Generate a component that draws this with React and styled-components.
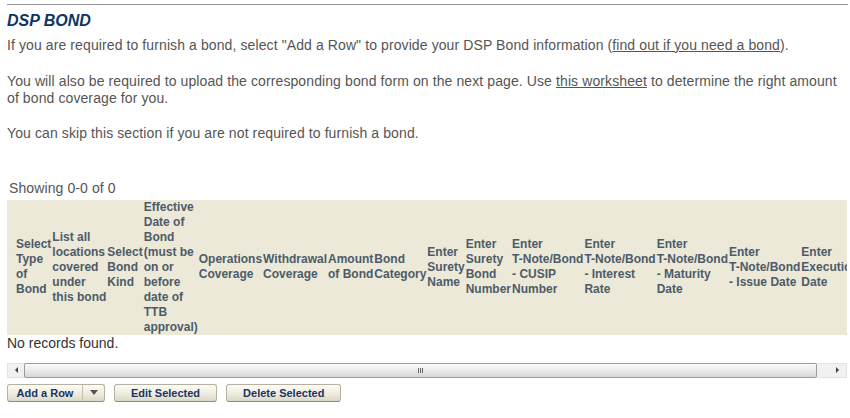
import { useLayoutEffect, useRef, useState } from "react";
import styled, { createGlobalStyle } from "styled-components";

const GlobalStyle = createGlobalStyle`
  body {
    margin: 0;
    background: #fff;
    font-family: "Liberation Sans", Arial, sans-serif;
  }
`;

const Page = styled.div`
  width: 841px;
  padding: 4px 2px 0 7px;
`;

const Rule = styled.hr`
  margin: 0;
  border: 0;
  border-top: 1px solid #999;
`;

const Title = styled.h2`
  margin: 6px 0 0;
  font-size: 16px;
  line-height: 20px;
  font-weight: bold;
  font-style: italic;
  color: #0d3566;
`;

const Para = styled.p`
  margin: ${p => p.$gap}px 0 0;
  font-size: 14px;
  line-height: 17.5px;
  letter-spacing: 0.1px;
  color: #555;

  a {
    color: inherit;
    text-decoration: underline;
  }
`;

const Showing = styled.div`
  margin-top: 37px;
  padding-left: 2px;
  font-size: 14px;
  line-height: 16px;
  letter-spacing: 0.1px;
  color: #555;
`;

const Grid = styled.div`
  margin-top: 4px;
  width: 840px;
`;

const Viewport = styled.div`
  overflow: hidden;
`;

const Table = styled.table`
  border-collapse: collapse;
  border-spacing: 0;
`;

const HeadRow = styled.tr`
  background: #ece9d8;
`;

const Th = styled.th`
  padding: 0 1px 0 0;
  text-align: left;
  vertical-align: middle;
  white-space: nowrap;
  font-size: 12px;
  line-height: 15px;
  font-weight: bold;
  color: #4d5b69;
`;

const SelectTh = styled.th`
  padding: 0 0 0 9px;
`;

const Empty = styled.td`
  padding: 0;
  font-size: 14px;
  line-height: 16px;
  color: #333;
  white-space: nowrap;
`;

const ScrollBar = styled.div`
  display: flex;
  height: 15px;
  margin-top: 12px;
  box-sizing: border-box;
  background: #f1f1f1;
  border: 1px solid #e2e2e2;
`;

const ArrowBox = styled.div`
  flex: none;
  width: 17px;
  display: flex;
  align-items: center;
  justify-content: center;
`;

const Arrow = styled.span`
  width: 0;
  height: 0;
  border-top: 3px solid transparent;
  border-bottom: 3px solid transparent;
  ${p => (p.$dir === "left" ? "border-right: 3px solid #444;" : "border-left: 3px solid #444;")}
`;

const Track = styled.div`
  flex: 1;
  display: flex;
  margin-left: -1px;
`;

const Thumb = styled.div`
  box-sizing: border-box;
  margin: -1px 0;
  display: flex;
  align-items: center;
  justify-content: center;
  border: 1px solid #9c9c9c;
  border-radius: 2px;
  background: linear-gradient(#fbfbfb, #ececec 45%, #d6d6d6);
`;

const Grip = styled.span`
  width: 5px;
  height: 5px;
  background: repeating-linear-gradient(90deg, #666 0 1px, transparent 1px 2px);
`;

const Actions = styled.div`
  display: flex;
  gap: 9px;
  margin-top: 6px;
`;

const buttonFace = `
  background: linear-gradient(#fdfcf6, #eeebdf 55%, #dcd8c6);
  border: 1px solid #b4b1a0;
  border-bottom-color: #8f8c7d;
  border-radius: 3px;
`;

const Button = styled.button`
  box-sizing: border-box;
  height: 18px;
  padding: 0 16px;
  font: bold 11px "Liberation Sans", Arial, sans-serif;
  color: #1a3461;
  cursor: pointer;
  ${buttonFace}
`;

const Split = styled.div`
  display: flex;
  box-sizing: border-box;
  height: 18px;
  ${buttonFace}
`;

const SplitMain = styled.button`
  width: 74px;
  padding: 0;
  border: 0;
  background: none;
  font: bold 11px "Liberation Sans", Arial, sans-serif;
  color: #1a3461;
  cursor: pointer;
`;

const SplitToggle = styled.button`
  width: 22px;
  padding: 0;
  border: 0;
  border-left: 1px solid #c3c0ae;
  background: none;
  display: flex;
  align-items: center;
  justify-content: center;
  cursor: pointer;
`;

const Caret = styled.span`
  width: 0;
  height: 0;
  border-left: 4px solid transparent;
  border-right: 4px solid transparent;
  border-top: 5px solid #555;
`;

const columns = [
  ["Select", "Type", "of", "Bond"],
  ["List all", "locations", "covered", "under", "this bond"],
  ["Select", "Bond", "Kind"],
  ["Effective", "Date of", "Bond", "(must be", "on or", "before", "date of", "TTB", "approval)"],
  ["Operations", "Coverage"],
  ["Withdrawal", "Coverage"],
  ["Amount", "of Bond"],
  ["Bond", "Category"],
  ["Enter", "Surety", "Name"],
  ["Enter", "Surety", "Bond", "Number"],
  ["Enter", "T-Note/Bond", "- CUSIP", "Number"],
  ["Enter", "T-Note/Bond", "- Interest", "Rate"],
  ["Enter", "T-Note/Bond", "- Maturity", "Date"],
  ["Enter", "T-Note/Bond", "- Issue Date"],
  ["Enter", "Execution", "Date"],
];

const BondGrid = () => {
  const viewRef = useRef(null);
  const [ratio, setRatio] = useState(1);

  // thumb length follows how much of the table is in view
  useLayoutEffect(() => {
    const el = viewRef.current;
    if (el && el.scrollWidth > 0) setRatio(el.clientWidth / el.scrollWidth);
  }, []);

  return (
    <Grid>
      <Viewport ref={viewRef}>
        <Table>
          <thead>
            <HeadRow>
              <SelectTh />
              {columns.map((lines, i) => (
                <Th key={i}>
                  {lines.map((line, j) => (
                    <span key={j}>
                      {j > 0 && <br />}
                      {line}
                    </span>
                  ))}
                </Th>
              ))}
            </HeadRow>
          </thead>
          <tbody>
            <tr>
              <Empty colSpan={columns.length + 1}>No records found.</Empty>
            </tr>
          </tbody>
        </Table>
      </Viewport>

      <ScrollBar>
        <ArrowBox>
          <Arrow $dir="left" />
        </ArrowBox>
        <Track>
          <Thumb style={{ width: `${ratio * 100}%` }}>
            <Grip />
          </Thumb>
        </Track>
        <ArrowBox>
          <Arrow $dir="right" />
        </ArrowBox>
      </ScrollBar>

      <Actions>
        <Split>
          <SplitMain>Add a Row</SplitMain>
          <SplitToggle>
            <Caret />
          </SplitToggle>
        </Split>
        <Button>Edit Selected</Button>
        <Button>Delete Selected</Button>
      </Actions>
    </Grid>
  );
};

export default function App() {
  return (
    <>
      <GlobalStyle />
      <Page>
        <Rule />
        <Title>DSP BOND</Title>
        <Para $gap={5.5}>
          If you are required to furnish a bond, select "Add a Row" to provide your DSP Bond
          information (<a href="#">find out if you need a bond</a>).
        </Para>
        <Para $gap={18.5}>
          You will also be required to upload the corresponding bond form on the next page. Use{" "}
          <a href="#">this worksheet</a> to determine the right amount of bond coverage for you.
        </Para>
        <Para $gap={17.5}>You can skip this section if you are not required to furnish a bond.</Para>
        <Showing>Showing 0-0 of 0</Showing>
        <BondGrid />
      </Page>
    </>
  );
}
